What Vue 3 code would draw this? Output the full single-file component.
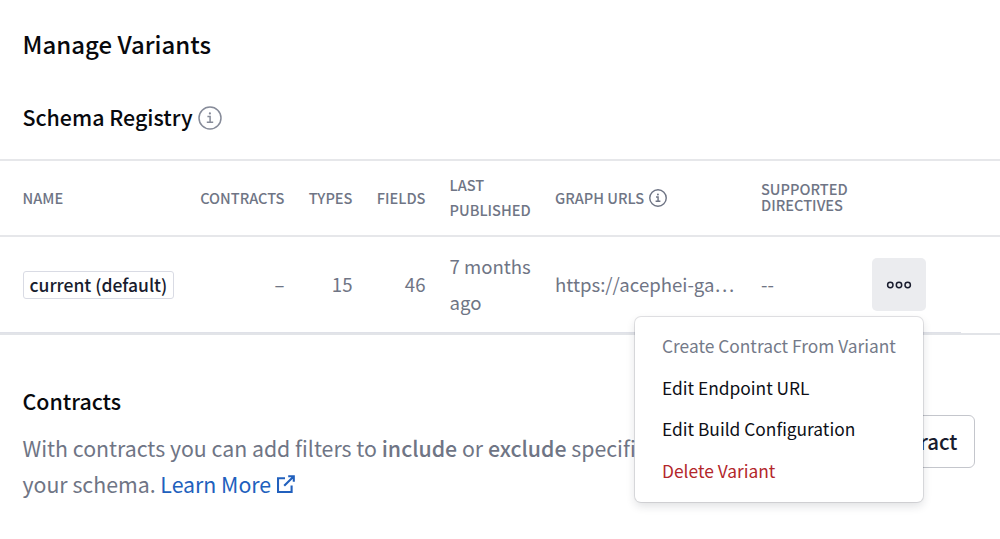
<script setup>
import { ref } from 'vue'

const variants = ref([
  {
    name: 'current (default)',
    contracts: '–',
    types: 15,
    fields: 46,
    published: '7 months ago',
    url: 'https://acephei-ga…',
    directives: '--'
  }
])

const menuOpen = ref(true)

const menuItems = [
  { label: 'Create Contract From Variant', type: 'disabled' },
  { label: 'Edit Endpoint URL', type: 'normal' },
  { label: 'Edit Build Configuration', type: 'normal' },
  { label: 'Delete Variant', type: 'danger' }
]
</script>

<template>
  <main class="page">
    <h1>Manage Variants</h1>

    <section>
      <h2 class="registryTitle">
        Schema Registry
        <svg class="infoLarge" viewBox="0 0 24 24">
          <circle cx="12" cy="12" r="11" />
          <path d="M9.4 10.6h2.7v5.6M8.8 16.3h6.4" />
          <circle class="dot" cx="11.9" cy="7.4" r="1.1" />
        </svg>
      </h2>

      <div class="variantTable">
        <div class="row headRow">
          <span>Name</span>
          <span class="right">Contracts</span>
          <span class="right">Types</span>
          <span class="right">Fields</span>
          <span class="published">Last Published</span>
          <span class="graphHead">
            Graph URLs
            <svg class="infoSmall" viewBox="0 0 24 24">
              <circle cx="12" cy="12" r="11" />
              <path d="M9.4 10.6h2.7v5.6M8.8 16.3h6.4" />
              <circle class="dot" cx="11.9" cy="7.2" r="1.3" />
            </svg>
          </span>
          <span class="directives">Supported Directives</span>
        </div>

        <div v-for="variant in variants" :key="variant.name" class="row bodyRow">
          <span><span class="badge">{{ variant.name }}</span></span>
          <span class="right">{{ variant.contracts }}</span>
          <span class="right">{{ variant.types }}</span>
          <span class="right">{{ variant.fields }}</span>
          <span>{{ variant.published }}</span>
          <span class="url">{{ variant.url }}</span>
          <span>{{ variant.directives }}</span>
          <div class="actions">
            <button class="moreButton" aria-label="More" @click="menuOpen = !menuOpen">
              <svg viewBox="0 0 26 8">
                <circle cx="4.3" cy="4" r="2.7" />
                <circle cx="13" cy="4" r="2.7" />
                <circle cx="21.7" cy="4" r="2.7" />
              </svg>
            </button>
            <ul v-if="menuOpen" class="menu">
              <li v-for="item in menuItems" :key="item.label" :class="item.type">
                {{ item.label }}
              </li>
            </ul>
          </div>
        </div>
      </div>
    </section>

    <section class="contracts">
      <div class="contractsText">
        <h2>Contracts</h2>
        <p>
          With contracts you can add filters to <b>include</b> or <b>exclude</b> specific parts of
          your schema.
          <a>Learn More<svg class="external" viewBox="0 0 18 18">
            <path d="M8 3.2H1v13.8h13.6v-6.6" />
            <path d="M11.2 1.2h5.6v5.6M16.6 1.4L7.2 10.8" />
          </svg></a>
        </p>
      </div>
      <button class="createButton">Create Contract</button>
    </section>
  </main>
</template>

<style>
body {
  background: #fff;
}
</style>

<style scoped>
.page {
  box-sizing: border-box;
  width: 1000px;
  height: 539px;
  padding-top: 26px;
  overflow: hidden;
  background: #fff;
  color: #6f7585;
  font-family: 'Noto Sans CJK SC', 'Noto Sans', sans-serif;
}

h1,
h2 {
  margin: 0;
  font-weight: 500;
  color: #08090d;
}

h1 {
  padding-left: 22.5px;
  font-size: 24px;
  line-height: 36px;
}

h2 {
  font-size: 21.4px;
  line-height: 32px;
}

.registryTitle {
  display: flex;
  align-items: center;
  gap: 5.5px;
  margin-top: 39px;
  padding-left: 22.5px;
}

svg {
  fill: none;
  stroke: currentColor;
}

.dot {
  fill: currentColor;
  stroke: none;
}

.infoLarge {
  width: 24px;
  height: 24px;
  margin-top: 2px;
  color: #868b99;
  stroke-width: 1.5;
}

.infoSmall {
  width: 18px;
  height: 18px;
  stroke-width: 1.9;
}

.variantTable {
  margin-top: 26px;
  border-top: 2px solid #e6e7ea;
  border-bottom: 2px solid #e2e4e8;
}

.row {
  display: grid;
  grid-template-columns: 153px 85px 44px 49px 81.5px 182px 87px 54px;
  column-gap: 24px;
  align-items: center;
  padding-left: 22.5px;
}

.headRow {
  height: 74px;
  border-bottom: 2px solid #e6e7ea;
  font-size: 14.6px;
  font-weight: 500;
  line-height: 25.5px;
  text-transform: uppercase;
}

.bodyRow {
  width: 938.5px;
  height: 95px;
  border-bottom: 1px solid #dfe1e8;
  font-size: 18.6px;
  line-height: 35.6px;
}

.bodyRow > span,
.published,
.directives {
  padding-bottom: 2px;
}

.right {
  text-align: right;
}

.graphHead {
  display: flex;
  align-items: center;
  gap: 5px;
}

.directives {
  line-height: 16.5px;
}

.url {
  white-space: nowrap;
}

.badge {
  display: inline-block;
  padding: 0 6px;
  border: 1px solid #d9dbe4;
  border-radius: 3px;
  color: #191c2e;
  font-size: 17.5px;
  font-weight: 500;
  line-height: 26px;
  white-space: nowrap;
}

.actions {
  position: relative;
  height: 53px;
}

.moreButton {
  display: flex;
  align-items: center;
  justify-content: center;
  width: 53.5px;
  height: 53px;
  padding: 0;
  border: none;
  border-radius: 5px;
  background: #ebecef;
  color: #191c2e;
}

.moreButton svg {
  width: 26px;
  height: 8px;
  stroke-width: 1.5;
}

.menu {
  position: absolute;
  top: 59px;
  right: 3px;
  z-index: 1;
  box-sizing: border-box;
  width: 288px;
  height: 185px;
  margin: 0;
  padding: 8px 27px;
  border-radius: 6px;
  background: #fff;
  box-shadow: 0 0 0 1px rgba(30, 35, 50, 0.12), 0 4px 10px rgba(30, 35, 50, 0.14);
  font-size: 17.35px;
  line-height: 41.7px;
  list-style: none;
  white-space: nowrap;
}

.normal {
  color: #0d0f16;
}

.disabled {
  color: #747a89;
}

.danger {
  color: #b3272b;
}

.contracts {
  display: flex;
  align-items: center;
  justify-content: space-between;
  margin-top: 49.5px;
  padding: 0 25.5px 0 22.5px;
}

.contractsText {
  width: 720px;
}

.contracts p {
  margin: 13.5px 0 0;
  font-size: 21.3px;
  line-height: 35.7px;
}

b {
  font-weight: 500;
}

a {
  color: #2160bd;
}

.external {
  width: 18px;
  height: 18px;
  margin-left: 6px;
  stroke-width: 2.1;
}

.createButton {
  height: 53px;
  margin-bottom: 2px;
  padding: 0 16px 2px;
  border: 1.5px solid #c4c6cc;
  border-radius: 6px;
  background: #fff;
  color: #191c2e;
  font-family: inherit;
  font-size: 20.5px;
  font-weight: 500;
  white-space: nowrap;
}
</style>
